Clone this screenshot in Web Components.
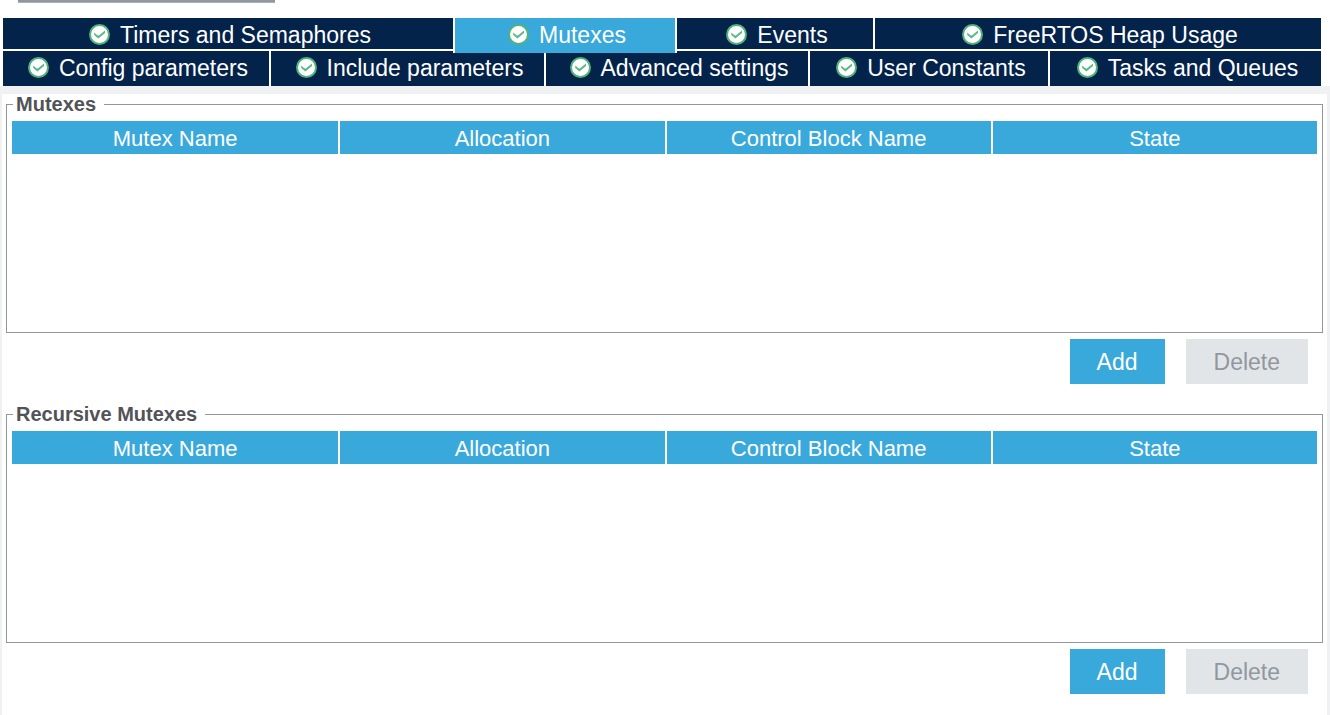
<!DOCTYPE html>
<html lang="en">
<head>
<meta charset="utf-8">
<meta name="viewport" content="width=device-width, initial-scale=1">
<title>FreeRTOS configuration</title>
<style>
  html, body { margin: 0; height: 100%; }
  body {
    font-family: "Liberation Sans", Arial, sans-serif;
    background: #fff;
    --blue: #39a9dc;
    --navy: #03234b;
    --line: #90989e;
    --frame: #f0f1f3;
  }
</style>
</head>
<body>
<config-page>
  <tab-row slot="tabs">
    <config-tab style="--grow:450">Timers and Semaphores</config-tab>
    <config-tab style="--grow:220" active>Mutexes</config-tab>
    <config-tab style="--grow:196">Events</config-tab>
    <config-tab style="--grow:446">FreeRTOS Heap Usage</config-tab>
  </tab-row>
  <tab-row slot="tabs" front>
    <config-tab style="--grow:266">Config parameters</config-tab>
    <config-tab style="--grow:273">Include parameters</config-tab>
    <config-tab style="--grow:262">Advanced settings</config-tab>
    <config-tab style="--grow:238">User Constants</config-tab>
    <config-tab style="--grow:271">Tasks and Queues</config-tab>
  </tab-row>
  <mutex-group>Mutexes</mutex-group>
  <mutex-group>Recursive Mutexes</mutex-group>
</config-page>

<script>
class BaseElement extends HTMLElement {
  constructor() {
    super();
    this.attachShadow({ mode: "open" }).innerHTML = this.constructor.markup;
  }
}

customElements.define("config-page", class extends BaseElement {
  static markup = `
    <style>
      :host { display: flex; flex-direction: column; min-height: 100%; }
      .splitter { box-sizing: border-box; width: 257px; height: 3px; margin: 0 0 15px 18px;
        background: #90989e; border-bottom: 1px solid #a9afb3; }
      nav { display: flex; flex-direction: column; gap: 2px; margin: 0 9px 0 3px; }
      main { flex: 1; box-sizing: border-box; border: solid var(--frame); border-width: 8px 3px 0 2px;
        padding: 0 4px; display: flex; flex-direction: column; gap: 20px; }
    </style>
    <div class="splitter"></div>
    <nav><slot name="tabs"></slot></nav>
    <main><slot></slot></main>`;
});

customElements.define("tab-row", class extends BaseElement {
  static markup = `
    <style>
      :host { display: flex; gap: 2px; height: 31px; }
      :host([front]) { height: 35px; }
    </style>
    <slot></slot>`;
});

customElements.define("check-icon", class extends BaseElement {
  static markup = `
    <style>
      :host { display: block; width: 21px; height: 21px; flex: none; }
      svg { display: block; }
    </style>
    <svg width="21" height="21" viewBox="0 0 21 21" aria-hidden="true">
      <circle cx="10.5" cy="10.5" r="9.5" fill="#fff" stroke="#4fb37b" stroke-width="2"/>
      <path d="M5.2 8.4V11L9.4 14.6 16 9V6.6L9.8 11.6 8.4 11.2Z" fill="#5cb985"/>
    </svg>`;
});

customElements.define("config-tab", class extends BaseElement {
  static markup = `
    <style>
      :host { display: flex; flex: var(--grow, 1) 1 0; min-width: 0; }
      :host([active]) { position: relative; margin-bottom: -4px; box-shadow: -2px 0 #fff, 2px 0 #fff; }
      button { flex: 1; min-width: 0; display: flex; justify-content: center; align-items: flex-start; gap: 10px;
        margin: 0; padding: 6px 0 0 4px; border: 0; background: var(--navy); color: #fff;
        font: 23px/23px "Liberation Sans", Arial, sans-serif; white-space: nowrap; }
      :host([active]) button { background: var(--blue); }
    </style>
    <button type="button"><check-icon></check-icon><span><slot></slot></span></button>`;
});

customElements.define("action-button", class extends BaseElement {
  static markup = `
    <style>
      :host { display: block; }
      button { display: block; height: 45px; margin: 0; padding: 2px 27px 0; border: 0;
        background: var(--blue); color: #fff;
        font: 23px/43px "Liberation Sans", Arial, sans-serif; }
      button:disabled { padding: 2px 28px 0; background: #e2e5e8; color: #90989e; }
    </style>
    <button type="button"><slot></slot></button>`;
  connectedCallback() {
    this.shadowRoot.querySelector("button").disabled = this.hasAttribute("disabled");
  }
});

customElements.define("mutex-group", class extends BaseElement {
  static markup = `
    <style>
      :host { display: block; }
      fieldset { margin: 0; min-width: 0; padding: 7px 5px 0; border: 1px solid var(--line); }
      legend { margin-left: 1px; padding: 0 8px 0 3px; color: #525357;
        font-weight: bold; font-size: 20px; line-height: 20px; }
      .list { min-height: 211px; }
      table { width: 100%; table-layout: fixed; border-collapse: separate; border-spacing: 0; }
      th { padding: 2px 0 0; background: var(--blue); color: #fff;
        font-weight: normal; font-size: 22px; line-height: 31px; }
      th + th { border-left: 2px solid #fff; }
      .actions { display: flex; justify-content: flex-end; gap: 21px; margin: 6px 15px 0 0; }
    </style>
    <fieldset>
      <legend><slot></slot></legend>
      <div class="list">
        <table>
          <thead><tr>
            <th scope="col">Mutex Name</th>
            <th scope="col">Allocation</th>
            <th scope="col">Control Block Name</th>
            <th scope="col">State</th>
          </tr></thead>
          <tbody></tbody>
        </table>
      </div>
    </fieldset>
    <div class="actions">
      <action-button>Add</action-button>
      <action-button disabled>Delete</action-button>
    </div>`;
});
</script>
</body>
</html>
